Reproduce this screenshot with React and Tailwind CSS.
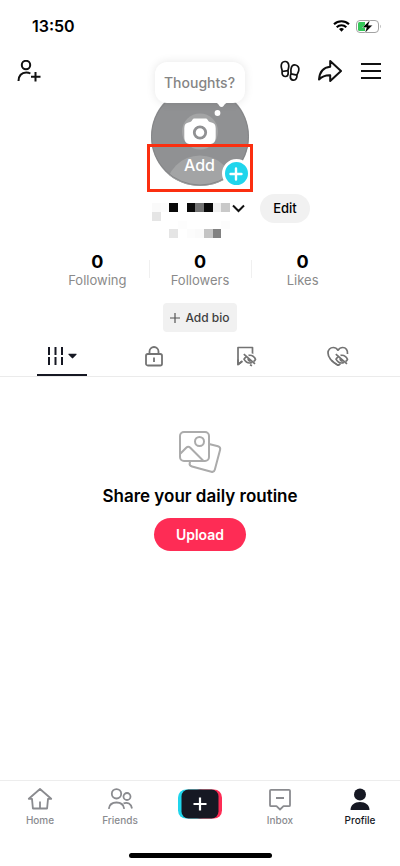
import React from 'react'
import clsx from 'clsx'

// [column, row, fill] of the cells hiding the account name and handle
const MASK_CELLS = [
  [0, 0, '#fafafa'],
  [1, 0, '#fcfcfc'],
  [2, 0, '#0a0a0a'],
  [4, 0, '#0a0a0a'],
  [5, 0, '#737373'],
  [6, 0, '#0a0a0a'],
  [7, 0, '#f0f0f0'],
  [8, 0, '#c9c9c9'],
  [0, 1, '#e5e5e5'],
  [3, 2, '#fdfdfd'],
  [8, 2, '#fcfcfc'],
  [2, 3, '#e5e5e5'],
  [4, 3, '#fcfcfc'],
  [5, 3, '#fafafa'],
  [6, 3, '#c4c4c4'],
  [7, 3, '#818181'],
]

const STATS = [
  { label: 'Following', value: 0 },
  { label: 'Followers', value: 0 },
  { label: 'Likes', value: 0 },
]

const StatusBar = () => (
  <div className="flex h-[52px] items-center justify-between pl-8 pr-[19px]">
    <span className="text-base font-semibold leading-5">13:50</span>
    <div className="flex items-center gap-1.5">
      <svg className="h-3 w-[17px]" viewBox="0 0 17 12" fill="none" stroke="#000" strokeWidth="2.1">
        <path d="M1 4.3a10.8 10.8 0 0 1 15 0" />
        <path d="M3.7 7.2a6.9 6.9 0 0 1 9.6 0" />
        <path d="M6 9.1a3.8 3.8 0 0 1 5 0L8.5 11.8z" fill="#000" stroke="none" />
      </svg>
      <svg className="h-[13px] w-[25px]" viewBox="0 0 25 13" fill="none">
        <rect x="0.5" y="0.5" width="22" height="12" rx="3.5" stroke="#a3a3a3" />
        <path d="M24 4.8c.9.3.9 3.1 0 3.4z" fill="#a3a3a3" />
        <path d="M3.5 2H9v9H3.5A1.5 1.5 0 0 1 2 9.5v-6A1.5 1.5 0 0 1 3.5 2z" fill="#34c759" />
        <path d="M14 0 6.5 7.5h4L9 13l7.500-7.800h-4.200z" fill="#000" stroke="#fff" strokeWidth="0.4" />
      </svg>
    </div>
  </div>
)

const Avatar = () => (
  <div className="relative flex flex-col items-center">
    <div className="relative z-10 flex h-[41px] w-[90px] items-center justify-center rounded-xl bg-white text-sm font-medium text-[#858585] shadow-[0_0_10px_rgba(0,0,0,0.1)]">
      Thoughts?
      <svg className="absolute left-[58px] top-[40px] h-4 w-4" viewBox="0 0 16 16" fill="#fff">
        <path d="M2 0h14c-3 .5-4 2-5.5 4-.8 1.2-3 1.2-4 0C5.5 2.5 4.5.8 2 0z" />
        <circle cx="4.5" cy="11" r="2.9" />
      </svg>
    </div>
    <button type="button" className="relative -mt-4 h-[99px] w-[98px] overflow-hidden rounded-full bg-[#909193]">
      <svg className="h-full w-full" viewBox="0 0 98 98">
        <circle cx="49" cy="44" r="18" fill="#a3a4a5" />
        <circle cx="49" cy="102" r="34" fill="#a3a4a5" />
        <circle cx="49" cy="49" r="48.5" fill="none" stroke="#858688" />
        <path
          d="M43.5 31h11c1.2 0 1.8.6 2.3 1.6.7 1.5 1.4 2 3 2.2 3.4.5 4.9 2.3 4.9 6v8.500c0 5.300-2.200 7.500-7.500 7.500H40.800c-5.300 0-7.500-2.200-7.500-7.500v-8.500c0-3.700 1.500-5.500 4.900-6 1.600-.2 2.300-.7 3-2.200.5-1 1.100-1.600 2.300-1.600z"
          fill="#fff"
        />
        <circle cx="49" cy="45" r="5.7" fill="#fff" stroke="#909193" strokeWidth="2.8" />
      </svg>
      <span className="absolute inset-x-0 bottom-[11px] text-center text-base font-medium leading-5 text-white">Add</span>
    </button>
    <button
      type="button"
      aria-label="Create story"
      className="absolute -bottom-0.5 -right-0.5 flex h-[29px] w-[29px] items-center justify-center rounded-full border-[3px] border-white bg-[#20d5ec]"
    >
      <svg className="h-3.5 w-3.5" viewBox="0 0 14 14" stroke="#fff" strokeWidth="2.4" strokeLinecap="round">
        <path d="M7 1.5v11M1.5 7h11" />
      </svg>
    </button>
    <div className="pointer-events-none absolute -inset-x-1 -bottom-1.5 h-12 border-[3px] border-[#fb2f10]" />
  </div>
)

const Header = () => (
  <header className="grid grid-cols-[1fr_auto_1fr] items-start pl-[17px] pr-[18px] pt-2.5">
    <button type="button" aria-label="Add friends" className="-mt-0.5 justify-self-start">
      <svg className="h-6 w-6" viewBox="0 0 24 24" fill="none" stroke="#111" strokeWidth="2">
        <circle cx="9" cy="5" r="4.2" />
        <path d="M1.5 21c0-5.2 3.1-8.5 7.7-8.5 1.7 0 3 .3 4.200 1" />
        <path d="M18.5 12v9.500M14 16.800h9.500" />
      </svg>
    </button>
    <Avatar />
    <div className="-mt-[3px] flex items-center gap-[18px] justify-self-end">
      <button type="button" aria-label="Profile views">
        <svg className="h-[22px] w-5" viewBox="0 0 20 22" fill="none" stroke="#111" strokeWidth="1.7" strokeLinejoin="round">
          <path d="M5 1.500C7.200 1.300 8.800 3.300 8.800 6c0 2-.7 3-.8 4.700 0 .7.200 1.200.2 2.300 0 2-1 3.400-2.700 3.500-1.800.1-3.300-1.200-3.400-3.300-.1-1.200.2-1.700 0-2.700C1.800 9 1.200 8 1.200 6c0-2.600 1.600-4.300 3.800-4.500z" />
          <path d="m2 11.500 6-.8" />
          <path d="M15.500 5c-2.200-.3-4.100 1.400-4.500 4.100-.3 1.900.1 2.900 0 4.600-.1.700-.5 1.300-.6 2.300-.3 2.100.7 3.700 2.400 4.100 1.900.4 3.600-.8 4-2.900.2-1.100 0-1.700.3-2.600.5-1.500 1.400-2.500 1.700-4.500.4-2.600-1-4.800-3.300-5.100z" />
          <path d="m11 13.800 6 1.300" />
        </svg>
      </button>
      <button type="button" aria-label="Share">
        <svg className="h-6 w-6" viewBox="0 0 24 24" fill="none" stroke="#111" strokeWidth="2" strokeLinejoin="round">
          <path d="M12.200 2 23 12 12.200 22v-5.800C7.400 16 4 17.400 1 20.500 1.500 13.600 5 8.400 12.200 7.700z" />
        </svg>
      </button>
      <button type="button" aria-label="Menu">
        <svg className="h-5 w-[22px]" viewBox="0 0 22 20" stroke="#111" strokeWidth="2">
          <path d="M1 3h20M1 10h20M1 17h20" />
        </svg>
      </button>
    </div>
  </header>
)

const NameRow = () => (
  <div className="mt-2 grid grid-cols-[1fr_auto_1fr] items-start">
    <button type="button" aria-label="Switch account" className="col-start-2 flex items-start gap-0.5 pt-[9px]">
      <svg className="h-[35px] w-[78px]" viewBox="0 0 9 4" preserveAspectRatio="none" shapeRendering="crispEdges">
        {MASK_CELLS.map(([x, y, fill]) => (
          <rect key={`${x}-${y}`} x={x} y={y} width="1" height="1" fill={fill} />
        ))}
      </svg>
      <svg className="h-3 w-4" viewBox="0 0 16 12" fill="none" stroke="#111" strokeWidth="2">
        <path d="M1 2.500 6.500 8 12 2.500" />
      </svg>
    </button>
    <button type="button" className="ml-3 h-[29px] w-[50px] justify-self-start rounded-full bg-[#f1f1f1] text-[13px] font-medium">
      Edit
    </button>
  </div>
)

const Stats = () => (
  <dl className="mt-3.5 grid grid-cols-3 px-[46px]">
    {STATS.map((stat, i) => (
      <div key={stat.label} className="relative flex flex-col-reverse items-center">
        <dt className="text-[13px] leading-4 text-[#8a8a8a]">{stat.label}</dt>
        <dd className="text-lg font-bold leading-5">{stat.value}</dd>
        {i > 0 && <span className="absolute left-0 top-2 h-[18px] w-px bg-[#f0f0f0]" />}
      </div>
    ))}
  </dl>
)

// small slashed eye, laid over the bottom right corner of a tab icon
const EyeOff = () => (
  <g>
    <path d="M8.500 14c1.800-4.400 8.500-6.200 12.500.5-2.600 5-9.600 4.800-12.500-.5z" fill="#fff" stroke="#fff" strokeWidth="4" />
    <path d="M11.500 11.800c-1.200.7-2 1.500-2.500 2.400 1.800 3.200 5 4.400 8 3.300M13.500 10.400c3-.6 5.600.9 7 3.900-.5 1-1.200 1.700-2 2.300" />
    <path d="M13.200 13.500c-.3 1.600.8 2.700 2.400 2.600M8.800 9.200l11.200 9.600" />
  </g>
)

const Tab = ({ label, active, children }) => (
  <button
    type="button"
    role="tab"
    aria-label={label}
    aria-selected={active}
    className="flex flex-col items-center justify-between"
  >
    <span className="flex h-7 items-center gap-[5px]">{children}</span>
    <span className={clsx('h-0.5 w-[50px]', active && 'bg-[#161823]')} />
  </button>
)

const Tabs = () => (
  <div role="tablist" className="mt-2.5 grid h-[35px] grid-cols-4 border-b border-[#ebebeb] px-4">
    <Tab label="Posts" active>
      <svg className="h-5 w-4" viewBox="0 0 16 20" stroke="#161823" strokeWidth="2">
        <path d="M2 1v8M8.500 1v8M15 1v8M2 11v8M8.500 11v8M15 11v8" />
      </svg>
      <svg className="h-1.5 w-[9px]" viewBox="0 0 10 6" fill="#161823">
        <path d="M1.200.5h7.600c.8 0 1 .7.500 1.200L5.700 5.300a1 1 0 0 1-1.400 0L.7 1.700C.2 1.200.4.500 1.200.5z" />
      </svg>
    </Tab>
    <Tab label="Private" active={false}>
      <svg className="h-[22px] w-5" viewBox="0 0 20 22" fill="none" stroke="#737373" strokeWidth="1.8">
        <rect x="2" y="9" width="16" height="11.500" rx="1.800" />
        <path d="M5.500 9V6.500a4.500 4.500 0 0 1 9 0V9M10 12.500v4.500" />
      </svg>
    </Tab>
    <Tab label="Favorites" active={false}>
      <svg className="h-[22px] w-[22px]" viewBox="0 0 22 22" fill="none" stroke="#737373" strokeWidth="1.7" strokeLinejoin="round">
        <path d="M17.500 12V2.500H3V19.500l7-5.500" />
        <EyeOff />
        <path d="M3 14.500v5l4-3M15 19.700l2 1" />
      </svg>
    </Tab>
    <Tab label="Liked" active={false}>
      <svg className="h-[22px] w-[22px]" viewBox="0 0 22 22" fill="none" stroke="#737373" strokeWidth="1.7" strokeLinejoin="round">
        <path d="M20.500 9c.4-4.200-1.800-6.500-4.700-6.500-2 0-3.600.9-4.800 2.700C9.800 3.400 8.200 2.500 6.200 2.500 3.300 2.500 1 4.700 1 8c0 5 4.500 9 10 12.200l2.500-1.500" />
        <EyeOff />
        <path d="M4.500 15.500c1.800 1.800 4 3.300 6.500 4.700l2.500-1.500" />
      </svg>
    </Tab>
  </div>
)

const EmptyState = () => (
  <main className="flex flex-1 flex-col items-center pt-[53px]">
    <svg className="h-11 w-11" viewBox="0 0 44 44" fill="none" stroke="#ababab" strokeWidth="2" strokeLinejoin="round">
      <path d="m31 14 9 2.300c1.800.5 2.600 1.700 2.100 3.500l-5.300 19.900c-.5 1.800-1.700 2.500-3.500 2L14 36.500c-1.800-.5-2.700-1.700-2.300-3.500l.6-2" />
      <rect x="2" y="2" width="29" height="29" rx="4" fill="#fff" />
      <circle cx="21.500" cy="11.500" r="4.500" />
      <path d="m2.500 23.500 5.700-5.800c1.400-1.400 2.700-1.400 4.100 0L25.500 31" />
    </svg>
    <h1 className="mt-2.5 text-[17px] font-semibold leading-6">Share your daily routine</h1>
    <button type="button" className="mt-2.5 h-[33px] w-[92px] rounded-full bg-[#fe2c55] text-sm font-semibold text-white">
      Upload
    </button>
  </main>
)

const NavItem = ({ label, active, children }) => (
  <a href="#" className={clsx('flex flex-col items-center gap-[3px]', active ? 'text-[#161823]' : 'text-[#8a8b8f]')}>
    <svg className="h-6 w-[26px]" viewBox="0 0 26 24" fill="none" stroke="currentColor" strokeWidth="1.8" strokeLinejoin="round">
      {children}
    </svg>
    <span className="text-[10px] font-medium leading-3">{label}</span>
  </a>
)

const BottomNav = () => (
  <nav className="grid h-[86px] grid-cols-5 content-start items-start border-t border-[#ededed] pt-1.5">
    <NavItem label="Home">
      <path d="M1.800 11.800 13 2l11.200 9.800H21l-.9 9.700H5.900L5 11.800zM13 14.500v7" />
    </NavItem>
    <NavItem label="Friends">
      <circle cx="9.500" cy="6.800" r="4.700" />
      <circle cx="20" cy="9.500" r="3.500" />
      <path d="M1.800 21.800c.5-4 3.400-6.300 7.700-6.300s7.200 2.300 7.700 6.300M16.500 16.300c4.200-1.300 7.700.3 8.500 5.200" />
    </NavItem>
    <button type="button" aria-label="Create" className="mt-0.5 justify-self-center">
      <svg className="h-[30px] w-11" viewBox="0 0 44 30">
        <rect width="30" height="29" y="0.5" rx="8" fill="#20d5ec" />
        <rect x="14" width="30" height="29" y="0.5" rx="8" fill="#fe2c55" />
        <rect x="3.5" y="0.5" width="37" height="29" rx="7" fill="#161823" />
        <path d="M22 8.500v13M15.500 15h13" stroke="#fff" strokeWidth="2.2" />
      </svg>
    </button>
    <NavItem label="Inbox">
      <path d="M4 2.800h18c.7 0 1 .3 1 1v14.400c0 .7-.3 1-1 1h-5.500L13 22.500l-3.500-3.300H4c-.7 0-1-.3-1-1V3.800c0-.7.3-1 1-1zM9 11h8" />
    </NavItem>
    <NavItem label="Profile" active>
      <circle cx="13" cy="7.500" r="6" fill="currentColor" stroke="none" />
      <path d="M3.500 23c0-5 4-8 9.500-8s9.500 3 9.500 8z" fill="currentColor" stroke="none" />
    </NavItem>
    <div className="col-span-5 mt-[27px] h-[5px] w-[143px] justify-self-center rounded-full bg-black" />
  </nav>
)

const App = () => (
  <div className="flex min-h-screen flex-col bg-white font-['Inter',sans-serif] text-black">
    <StatusBar />
    <Header />
    <NameRow />
    <Stats />
    <button
      type="button"
      className="mt-[15px] flex h-[29px] items-center gap-[5px] self-center rounded bg-[#f1f1f1] px-[7px] text-xs font-medium text-[#3f3f3f]"
    >
      <svg className="h-2.5 w-2.5" viewBox="0 0 10 10" stroke="#555" strokeWidth="1.2">
        <path d="M5 0v10M0 5h10" />
      </svg>
      Add bio
    </button>
    <Tabs />
    <EmptyState />
    <BottomNav />
  </div>
)

export default App
